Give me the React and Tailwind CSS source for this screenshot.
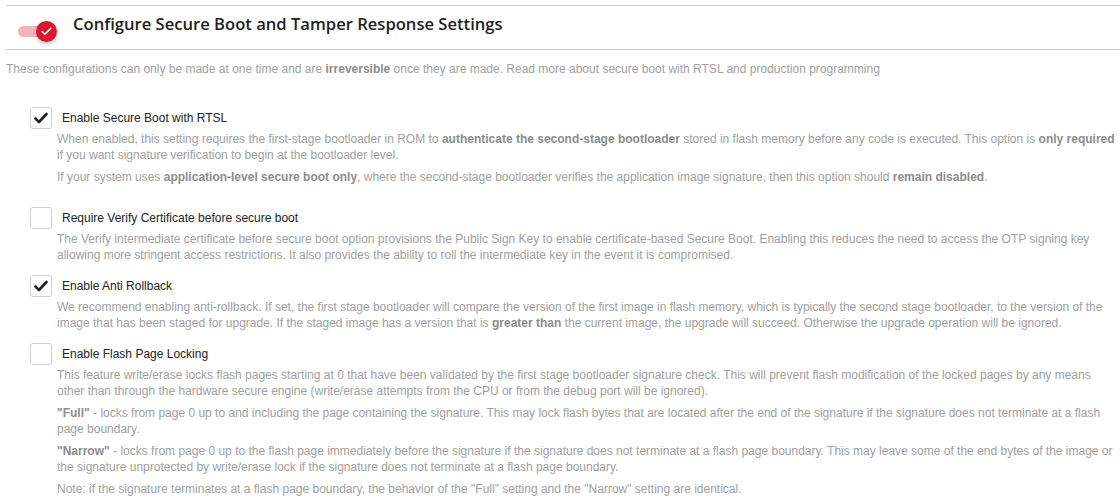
import { Check } from 'lucide-react'

const B = ({ children }) => <b className="font-bold text-[#8c8c8c]">{children}</b>

const ITEMS = [
  {
    label: 'Enable Secure Boot with RTSL',
    checked: true,
    extra: 'mb-[22px]',
    paras: [
      <>When enabled, this setting requires the first-stage bootloader in ROM to <B>authenticate the second-stage bootloader</B> stored in flash memory before any code is executed. This option is <B>only required</B> if you want signature verification to begin at the bootloader level.</>,
      <>If your system uses <B>application-level secure boot only</B>, where the second-stage bootloader verifies the application image signature, then this option should <B>remain disabled</B>.</>,
    ],
  },
  {
    label: 'Require Verify Certificate before secure boot',
    checked: false,
    paras: [
      <>The Verify intermediate certificate before secure boot option provisions the Public Sign Key to enable certificate-based Secure Boot. Enabling this reduces the need to access the OTP signing key allowing more stringent access restrictions. It also provides the ability to roll the intermediate key in the event it is compromised.</>,
    ],
  },
  {
    label: 'Enable Anti Rollback',
    checked: true,
    paras: [
      <>We recommend enabling anti-rollback. If set, the first stage bootloader will compare the version of the first image in flash memory, which is typically the second stage bootloader, to the version of the image that has been staged for upgrade. If the staged image has a version that is <B>greater than</B> the current image, the upgrade will succeed. Otherwise the upgrade operation will be ignored.</>,
    ],
  },
  {
    label: 'Enable Flash Page Locking',
    checked: false,
    paras: [
      <>This feature write/erase locks flash pages starting at 0 that have been validated by the first stage bootloader signature check. This will prevent flash modification of the locked pages by any means other than through the hardware secure engine (write/erase attempts from the CPU or from the debug port will be ignored).</>,
      <><B>"Full"</B> - locks from page 0 up to and including the page containing the signature. This may lock flash bytes that are located after the end of the signature if the signature does not terminate at a flash page boundary.</>,
      <><B>"Narrow"</B> - locks from page 0 up to the flash page immediately before the signature if the signature does not terminate at a flash page boundary. This may leave some of the end bytes of the image or the signature unprotected by write/erase lock if the signature does not terminate at a flash page boundary.</>,
      <>Note: if the signature terminates at a flash page boundary, the behavior of the "Full" setting and the "Narrow" setting are identical.</>,
    ],
  },
]

function CheckBox({ checked }) {
  return (
    <div className="w-[22px] h-[22px] shrink-0 rounded-[3px] border border-[#cfcfcf] bg-white flex items-center justify-center">
      {checked && (
        <svg width="14" height="12" viewBox="0 0 14 12">
          <path d="M1.5 6.5 L5 10 L12.5 2" fill="none" stroke="#222" strokeWidth="2.6" strokeLinecap="round" strokeLinejoin="round" />
        </svg>
      )}
    </div>
  )
}

function Option({ item }) {
  return (
    <div className={item.extra || 'mb-[12px]'}>
      <div className="flex items-center">
        <CheckBox checked={item.checked} />
        <span className="ml-[10px] text-[12px] text-[#222]">{item.label}</span>
      </div>
      <div className="pl-[27px] mt-[2px] space-y-[6px]">
        {item.paras.map((p, i) => (
          <p key={i} className="text-[12px] leading-[16px] text-[#a0a0a0]">{p}</p>
        ))}
      </div>
    </div>
  )
}

export default function App() {
  return (
    <div className="min-h-screen bg-white pt-[5px] pl-[6px] font-['Liberation_Sans',Arial,sans-serif]">
      <div className="h-[45px] border-y border-[#cccccc] flex items-center">
        <div className="relative w-[40px] h-[22px] ml-[12px] mt-[8px]">
          <div className="absolute left-0 top-[5px] w-[26px] h-[11px] rounded-full bg-[#f4b3bc]" />
          <div className="absolute left-[18px] top-0 w-[21px] h-[21px] rounded-full bg-[#d8192b] shadow-[0_2px_4px_rgba(0,0,0,0.25)] flex items-center justify-center">
            <Check size={13} strokeWidth={3} color="#fff" />
          </div>
        </div>
        <h1 className="ml-[15px] mb-[7px] text-[16.6px] font-semibold text-[#222] font-['Open_Sans',sans-serif]">
          Configure Secure Boot and Tamper Response Settings
        </h1>
      </div>

      <p className="mt-[11px] text-[12px] leading-[16px] text-[#a0a0a0]">
        These configurations can only be made at one time and are <B>irreversible</B> once they are made. Read more about secure boot with RTSL and production programming
      </p>

      <div className="ml-[24px] mt-[30px]">
        {ITEMS.map(it => <Option key={it.label} item={it} />)}
      </div>
    </div>
  )
}
